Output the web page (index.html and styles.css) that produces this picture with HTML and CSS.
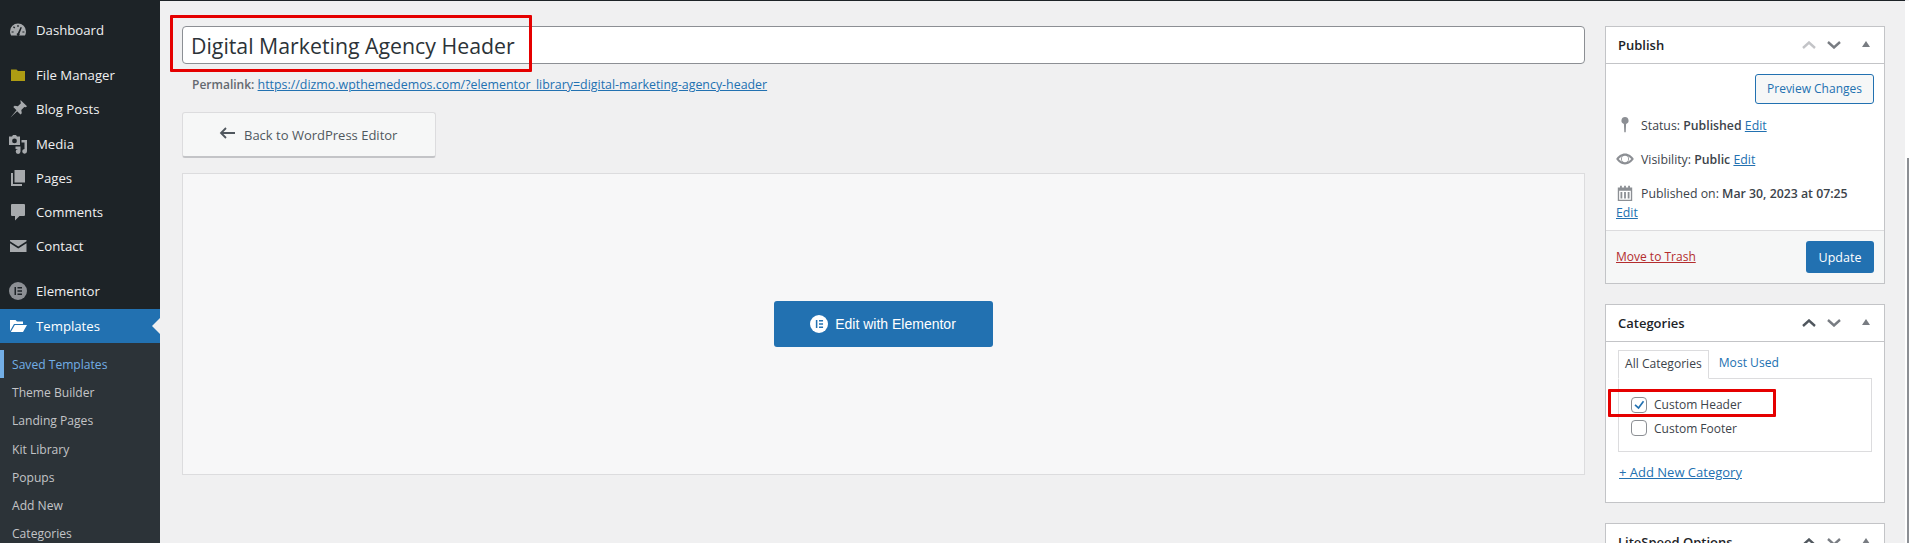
FILE: index.html
```html
<!DOCTYPE html>
<html lang="en">
<head>
  <meta charset="UTF-8">
  <title>Edit Template</title>
  <link rel="stylesheet" href="styles.css">
</head>
<body>
<div class="page">
  <div class="top-line"></div>

  <div class="layout">
    <div class="sidebar">
      <div class="menu-group">
        <div class="menu-item">
          <svg class="menu-icon" viewBox="0 0 20 20"><path fill="#a7aaad" d="M10 3.500a8 8 0 0 0-8 8c0 1.500.4 2.800 1.100 4h13.800a8 8 0 0 0 1.100-4 8 8 0 0 0-8-8z"/><path fill="#1d2327" d="M9.400 5h1.200v2H9.400zM5 7.200l.9-.9 1.300 1.300-.9.900zM3.600 11.400h2v1.200h-2zM14.400 11.400h2v1.200h-2zM12.600 7l1.300.5-2.400 6.100a1.500 1.500 0 1 1-1.700-.7z"/></svg>
          <span>Dashboard</span>
        </div>
      </div>
      <div class="menu-group">
        <div class="menu-item">
          <svg class="menu-icon" viewBox="0 0 20 20"><path fill="#ae9c13" d="M3 4.500h5.500l1.500 1.500h7v10H3z"/></svg>
          <span>File Manager</span>
        </div>
        <div class="menu-item">
          <svg class="menu-icon" viewBox="0 0 20 20"><path fill="#a7aaad" d="M12.500 1l6.500 6.300-1.200 1-1.500-.4-3 3 .5 3.300-1.300 1.300-3.300-3.300-6.700 6.300 6-7.200L5.300 8l1.300-1.300 3.300.5 3-3-.4-1.500z"/></svg>
          <span>Blog Posts</span>
        </div>
        <div class="menu-item">
          <svg class="menu-icon" viewBox="0 0 20 20"><path fill="#a7aaad" fill-rule="evenodd" d="M1 2.500h3l1-1.500h3l1 1.500h3v8.500H1zM6.500 4.500a2.400 2.400 0 1 0 0 4.800 2.400 2.400 0 0 0 0-4.800z"/><path fill="#a7aaad" d="M13.500 6H19v11.300a2.400 2.400 0 1 1-2.500-2.400V8.500h-3zM7.500 12.500H12.500v5a2.400 2.400 0 1 1-2.500-2.400V15H7.500z"/></svg>
          <span>Media</span>
        </div>
        <div class="menu-item">
          <svg class="menu-icon" viewBox="0 0 20 20"><path fill="#a7aaad" d="M6.500 2H17v12.500H6.500zM3 5h2v11h9v2H3z"/></svg>
          <span>Pages</span>
        </div>
        <div class="menu-item">
          <svg class="menu-icon" viewBox="0 0 20 20"><path fill="#a7aaad" d="M4 2h12a1 1 0 0 1 1 1v10a1 1 0 0 1-1 1h-4.500l-4.500 4.500V14H4a1 1 0 0 1-1-1V3a1 1 0 0 1 1-1z"/></svg>
          <span>Comments</span>
        </div>
        <div class="menu-item">
          <svg class="menu-icon" viewBox="0 0 20 20"><path fill="#a7aaad" d="M2 4h16.500v1.200L10.250 10.500 2 5.200zM2 7.300l8.250 5.200 8.250-5.200V16H2z"/></svg>
          <span>Contact</span>
        </div>
      </div>
      <div class="menu-item">
        <svg class="menu-icon" viewBox="0 0 20 20"><circle cx="10" cy="10" r="9" fill="#8c8f94"/><path fill="#1d2327" d="M6.500 6h1.500v8H6.500zM9.500 6H14v1.500H9.500zM9.500 9.250H14v1.500H9.500zM9.500 12.500H14V14H9.500z"/></svg>
        <span>Elementor</span>
      </div>
      <div class="menu-item active">
        <svg class="menu-icon" viewBox="0 0 20 20"><path fill="#fff" d="M2 4h5.500L9 5.500h6V8H6L2 15zM6.800 9H19l-4 7H2.800z"/></svg>
        <span>Templates</span>
        <div class="notch"></div>
      </div>
      <div class="submenu">
        <div class="sub-item current">Saved Templates</div>
        <div class="sub-item">Theme Builder</div>
        <div class="sub-item">Landing Pages</div>
        <div class="sub-item">Kit Library</div>
        <div class="sub-item">Popups</div>
        <div class="sub-item">Add New</div>
        <div class="sub-item">Categories</div>
      </div>
    </div>

    <div class="content">
      <div class="editor-col">
        <div class="title-input">Digital Marketing Agency Header</div>
        <div class="permalink">
          <strong>Permalink:</strong>
          <a href="#">https://dizmo.wpthemedemos.com/?elementor_library=digital-marketing-agency-header</a>
        </div>
        <div class="back-btn">
          <svg class="back-arrow" viewBox="0 0 16 12"><path fill="none" stroke="#50575e" stroke-width="1.800" d="M16 6H2M7 1L2 6l5 5"/></svg>
          <span>Back to WordPress Editor</span>
        </div>
        <div class="elementor-box">
          <div class="elementor-btn">
            <svg class="elementor-logo" viewBox="0 0 20 20"><circle cx="10" cy="10" r="10" fill="#fff"/><path fill="#2271b1" d="M6.500 5.500h1.700v9H6.500zM10 5.500h4.500v1.700H10zM10 9.150h4.500v1.700H10zM10 12.800h4.500v1.700H10z"/></svg>
            <span>Edit with Elementor</span>
          </div>
        </div>
      </div>

      <div class="side-col">
        <div class="panel publish">
          <div class="panel-head">
            <h2>Publish</h2>
            <div class="head-icons">
              <svg viewBox="0 0 14 8"><path fill="none" stroke="#c3c4c7" stroke-width="2.400" d="M1 7l6-5.500L13 7"/></svg>
              <svg viewBox="0 0 14 8"><path fill="none" stroke="#787c82" stroke-width="2.400" d="M1 1l6 5.500L13 1"/></svg>
              <svg class="tri" viewBox="0 0 8 6"><path fill="#787c82" d="M4 0l4 6H0z"/></svg>
            </div>
          </div>
          <div class="publish-body">
            <div class="preview-row"><div class="preview-btn">Preview Changes</div></div>
            <div class="info-row">
              <svg class="info-icon" viewBox="0 0 20 20"><path fill="#8c8f94" d="M10 1a4 4 0 0 1 1.200 7.800L10.800 18H9.200l-.4-9.200A4 4 0 0 1 10 1z"/></svg>
              <span>Status: <b>Published</b> <a href="#">Edit</a></span>
            </div>
            <div class="info-row">
              <svg class="info-icon" viewBox="0 0 20 20"><path fill="#8c8f94" fill-rule="evenodd" d="M10 4c4.200 0 7.700 2.700 9.800 6-2.100 3.300-5.600 6-9.800 6S2.300 13.300.2 10C2.300 6.700 5.800 4 10 4zM3 10c1.100 1.300 2.400 2.300 3.900 3a4.500 4.500 0 0 1 0-6C5.400 7.700 4.100 8.700 3 10zm10.100-3a4.500 4.500 0 0 1 0 6c1.500-.7 2.800-1.700 3.900-3-1.100-1.300-2.400-2.300-3.900-3zM10 6.500a3.500 3.500 0 1 0 0 7 3.500 3.500 0 0 0 0-7z"/></svg>
              <span>Visibility: <b>Public</b> <a href="#">Edit</a></span>
            </div>
            <div class="info-row date-row">
              <svg class="info-icon" viewBox="0 0 20 20"><path fill="#8c8f94" fill-rule="evenodd" d="M2 4h2.500V2h2v2h2.500V2h2v2h2.500V2h2v2H18v15H2zM3.500 7.500V17.500h13V7.500zM5 9h2v7H5zM9 9h2v7H9zM13 9h2v7h-2z"/></svg>
              <span>Published on: <b>Mar 30, 2023 at 07:25</b></span>
            </div>
            <a class="date-edit" href="#">Edit</a>
          </div>
          <div class="publish-foot">
            <a class="trash" href="#">Move to Trash</a>
            <div class="update-btn">Update</div>
          </div>
        </div>

        <div class="panel categories">
          <div class="panel-head">
            <h2>Categories</h2>
            <div class="head-icons">
              <svg viewBox="0 0 14 8"><path fill="none" stroke="#50575e" stroke-width="2.400" d="M1 7l6-5.500L13 7"/></svg>
              <svg viewBox="0 0 14 8"><path fill="none" stroke="#787c82" stroke-width="2.400" d="M1 1l6 5.500L13 1"/></svg>
              <svg class="tri" viewBox="0 0 8 6"><path fill="#787c82" d="M4 0l4 6H0z"/></svg>
            </div>
          </div>
          <div class="cat-body">
            <div class="tabs">
              <div class="tab selected">All Categories</div>
              <a class="tab" href="#">Most Used</a>
            </div>
            <div class="cat-list">
              <div class="cat-row">
                <span class="checkbox">
                  <svg viewBox="0 0 16 16"><path fill="#2271b1" d="M12.400 3l1.500 1.200-6.300 8.600L2.800 8.700l1.300-1.500 3.200 2.700z"/></svg>
                </span>
                <span>Custom Header</span>
              </div>
              <div class="cat-row">
                <span class="checkbox"></span>
                <span>Custom Footer</span>
              </div>
            </div>
            <a class="add-cat" href="#">+ Add New Category</a>
          </div>
        </div>

        <div class="panel litespeed">
          <div class="panel-head">
            <h2>LiteSpeed Options</h2>
            <div class="head-icons">
              <svg viewBox="0 0 14 8"><path fill="none" stroke="#50575e" stroke-width="2.400" d="M1 7l6-5.500L13 7"/></svg>
              <svg viewBox="0 0 14 8"><path fill="none" stroke="#787c82" stroke-width="2.400" d="M1 1l6 5.500L13 1"/></svg>
              <svg class="tri" viewBox="0 0 8 6"><path fill="#787c82" d="M4 0l4 6H0z"/></svg>
            </div>
          </div>
        </div>
      </div>
    </div>

    <div class="page-edge"><div class="edge-line"></div></div>
  </div>

  <!-- red annotation boxes drawn on top of the screenshot -->
  <div class="mark mark-title"></div>
  <div class="mark mark-cat"></div>
</div>
</body>
</html>
```

FILE: styles.css
```css
* {
  box-sizing: border-box;
}

html, body {
  margin: 0;
  height: 100%;
}

body {
  font-family: "Open Sans", "Noto Sans", sans-serif;
  font-size: 12.5px;
  color: #3c434a;
  background: #f0f0f1;
  overflow: hidden;
}

a {
  color: #2271b1;
}

.page {
  position: relative;
  width: 1909px;
  height: 543px;
  overflow: hidden;
}

.top-line {
  height: 1px;
  width: 1905px;
  background: #1d2327;
}

.layout {
  display: flex;
  height: 542px;
}

/* left admin menu */
.sidebar {
  width: 160px;
  flex-shrink: 0;
  background: #1d2327;
  padding-top: 12px;
}

.menu-group {
  margin-bottom: 11px;
}

.menu-item {
  position: relative;
  display: flex;
  align-items: center;
  gap: 8px;
  height: 34.2px;
  padding-left: 8px;
  font-size: 13.2px;
  color: #f0f0f1;
}

.menu-icon {
  width: 20px;
  height: 20px;
  flex-shrink: 0;
}

.menu-item.active {
  height: 34px;
  background: #2271b1;
  color: #fff;
  margin-top: 0.6px;
}

.notch {
  position: absolute;
  right: 0;
  top: 9px;
  border: 8px solid transparent;
  border-right-color: #f0f0f1;
  border-left-width: 0;
}

.submenu {
  background: #2c3338;
  padding-top: 7px;
  padding-bottom: 7px;
}

.sub-item {
  height: 28.2px;
  line-height: 29px;
  padding-left: 12px;
  font-size: 12.1px;
  color: #c3c4c7;
}

.sub-item.current {
  color: #72aee6;
  border-left: 4px solid #72aee6;
  padding-left: 8px;
}

/* main area */
.content {
  flex: 1;
  display: flex;
  gap: 20px;
  padding: 25px 20px 0 22px;
}

.editor-col {
  width: 1403px;
}

.title-input {
  height: 38px;
  line-height: 37px;
  padding-left: 8px;
  font-size: 21.3px;
  color: #2c3338;
  background: #fff;
  border: 1px solid #8c8f94;
  border-radius: 4px;
}

.permalink {
  height: 48px;
  padding: 12px 0 0 10px;
  font-size: 12.4px;
  color: #646970;
}

.permalink strong {
  font-size: 12px;
  font-weight: 600;
}

.back-btn {
  display: flex;
  align-items: center;
  gap: 9px;
  width: 254px;
  height: 46px;
  padding-left: 36px;
  font-size: 13px;
  color: #50575e;
  background: #f6f7f7;
  border: 1px solid #dcdcde;
  border-bottom: 2px solid #c3c4c7;
  border-radius: 3px;
}

.back-arrow {
  width: 16px;
  height: 12px;
  margin-top: -4px;
}

.elementor-box {
  display: flex;
  align-items: center;
  justify-content: center;
  height: 302px;
  margin-top: 15px;
  background: #f7f7f8;
  border: 1px solid #dcdcde;
}

.elementor-btn {
  display: flex;
  align-items: center;
  justify-content: center;
  gap: 7px;
  width: 219px;
  height: 46px;
  margin-right: 1px;
  font-family: "Liberation Sans", Arial, sans-serif;
  font-size: 14px;
  color: #fff;
  background: #2271b1;
  border-radius: 3px;
}

.elementor-logo {
  width: 18px;
  height: 18px;
}

/* right column */
.side-col {
  width: 280px;
  flex-shrink: 0;
}

.panel {
  background: #fff;
  border: 1px solid #c3c4c7;
  margin-bottom: 20px;
}

.panel-head {
  display: flex;
  align-items: center;
  justify-content: space-between;
  height: 37px;
  padding: 0 14px 0 12px;
  border-bottom: 1px solid #c3c4c7;
}

.panel-head h2 {
  margin: 0;
  font-size: 13px;
  font-weight: 600;
  color: #1d2327;
}

.head-icons {
  display: flex;
  align-items: center;
}

.head-icons svg {
  width: 14px;
  height: 8px;
  margin-left: 11px;
}

.head-icons svg.tri {
  width: 8px;
  height: 6px;
  margin-left: 21px;
  margin-top: -3px;
}

.publish {
  height: 258px;
}

.publish-body {
  height: 166px;
  padding: 10px 10px 0;
}

.preview-row {
  display: flex;
  justify-content: flex-end;
}

.preview-btn {
  width: 119px;
  height: 30px;
  line-height: 28px;
  text-align: center;
  font-size: 12px;
  color: #2271b1;
  background: #f6f7f7;
  border: 1px solid #2271b1;
  border-radius: 3px;
}

.info-row {
  display: flex;
  align-items: center;
  gap: 7px;
  height: 34px;
  font-size: 12.3px;
}

.preview-row + .info-row {
  margin-top: 4px;
}

.info-icon {
  width: 18px;
  height: 18px;
  flex-shrink: 0;
}

.info-row b {
  font-weight: 600;
}

.date-edit {
  display: block;
  margin-top: -6px;
  font-size: 12.3px;
}

.publish-foot {
  display: flex;
  align-items: center;
  justify-content: space-between;
  height: 53px;
  padding: 0 10px;
  background: #f6f7f7;
  border-top: 1px solid #dcdcde;
}

.trash {
  font-size: 12px;
  color: #b32d2e;
  margin-top: -2px;
}

.update-btn {
  width: 68px;
  height: 32px;
  line-height: 33px;
  text-align: center;
  font-size: 12.5px;
  color: #fff;
  background: #2271b1;
  border-radius: 3px;
}

.categories {
  height: 199px;
}

.cat-body {
  padding: 8px 12px 0;
}

.tabs {
  display: flex;
  height: 28px;
  font-size: 12.1px;
}

.tab {
  height: 29px;
  line-height: 26px;
  padding: 0 6px;
  text-decoration: none;
}

.tab + .tab {
  margin-left: 4px;
}

.tab.selected {
  color: #3c434a;
  background: #fff;
  border: 1px solid #dcdcde;
  border-bottom: 1px solid #fff;
  position: relative;
  z-index: 1;
}

.cat-list {
  height: 74px;
  padding: 14px 0 0 12px;
  border: 1px solid #dcdcde;
  font-size: 12px;
}

.cat-row {
  display: flex;
  align-items: center;
  gap: 7px;
  height: 23.5px;
}

.checkbox {
  width: 16px;
  height: 16px;
  flex-shrink: 0;
  background: #fff;
  border: 1px solid #8c8f94;
  border-radius: 4px;
}

.checkbox svg {
  display: block;
  width: 14px;
  height: 14px;
}

.add-cat {
  display: block;
  margin-top: 11px;
  padding-left: 1px;
  font-size: 13px;
}

.litespeed {
  margin-bottom: 0;
}

/* strip at the right edge */
.page-edge {
  width: 4px;
  flex-shrink: 0;
  padding-top: 157px;
  background: #fff;
}

.edge-line {
  height: 100%;
  border-right: 2px solid #8c8f94;
}

/* red annotations */
.mark {
  position: absolute;
  border: 3px solid #e50000;
  border-radius: 1px;
}

.mark-title {
  left: 170px;
  top: 15px;
  width: 362px;
  height: 57px;
}

.mark-cat {
  left: 1608px;
  top: 389px;
  width: 168px;
  height: 28px;
}
```
